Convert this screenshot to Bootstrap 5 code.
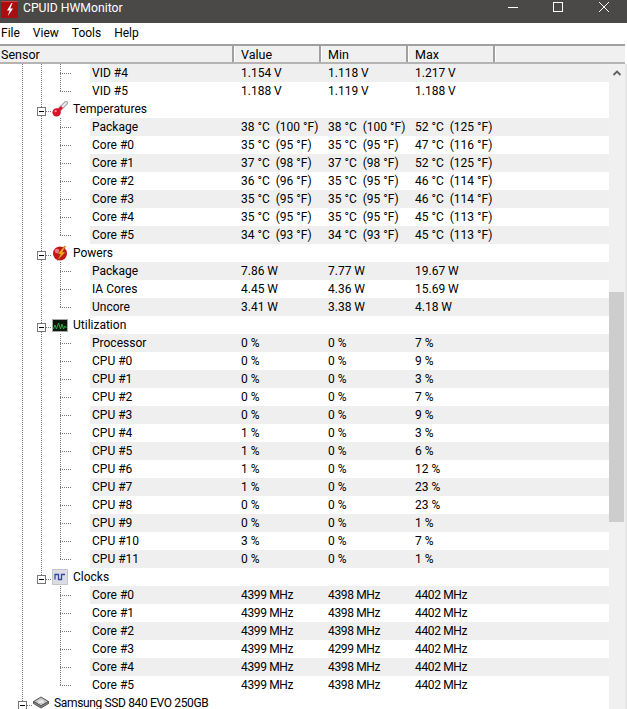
<!DOCTYPE html>
<html lang="en">
<head>
<meta charset="utf-8">
<title>CPUID HWMonitor</title>
<link href="https://cdn.jsdelivr.net/npm/bootstrap@5.3.0/dist/css/bootstrap.min.css" rel="stylesheet">
<style>
html,body{height:709px;overflow:hidden;background:#fff}
body{font:12px/18px Roboto,sans-serif;color:#000;width:627px}
.titlebar{height:23px;background:#4a4947;color:#fff;font-size:12.2px;line-height:16px}
.logo{width:18px;height:18px;margin:1px 4px 0 1px;display:block}
.winbtns{margin-left:auto;width:119px;height:23px;margin-right:18px;display:block}
.menubar{height:20px;line-height:20px;background:#fff;padding-left:1px}
.menubar span{margin-right:13px}
.headarea{height:20px;width:625px;background:#f0f0f0;border-top:2px solid #a0a0a0;border-bottom:2px solid #b4b4b4;line-height:18px;margin-top:1px;font-size:12.5px}
.hc{border-right:2px solid #a0a0a0;box-shadow:1px 0 0 #fff;height:16px;padding-left:7px;width:87px}
.hc.first{width:234px;padding-left:1px}
.viewport{height:645px}
.treepane{width:609px;overflow:hidden}
.dots-v{background-image:repeating-linear-gradient(to bottom,#777 0 1px,transparent 1px 2px);background-repeat:no-repeat;background-size:1px 100%}
.rail{background-position:22px 0}
.grp{background-position:41px 0}
.grp.lastgrp{background-size:1px 8px}
.hd{height:18px;padding-left:37px}
.hd.top{padding-left:18px;background-position:22px 0;background-size:1px 8px}
.toggle{width:9px;height:9px;border:1px solid #777;background:#fff;margin-top:7px;flex:none;padding:3px 1px}
.toggle i{display:block;height:1px;background:#000}
.conn{width:6px;height:9px;margin-top:7px;flex:none;background:repeating-linear-gradient(to right,#777 0 1px,transparent 1px 2px) 0 4px/100% 1px no-repeat}
.ico{width:16px;height:16px;flex:none;margin-top:1px;display:block}
.lbl{margin-left:5px}
.lbl.tight{letter-spacing:-.35px}
.kids{padding-left:60px}
.leaf{height:18px}
.tick{width:30px;flex:none;height:18px;background:repeating-linear-gradient(to bottom,#777 0 1px,transparent 1px 2px) 0 0/1px 100% no-repeat,repeating-linear-gradient(to right,#777 0 1px,transparent 1px 2px) 0 9px/11px 1px no-repeat}
.leaf:last-child .tick{background-size:1px 10px,11px 1px}
.strip{flex:1;height:18px;padding-left:2px;white-space:pre}
.leaf:nth-child(odd) .strip{background:#efefef}
.strip span{width:87px;display:block}
.strip span:first-child{width:149px}
.mhz .strip span+span{letter-spacing:-.35px}
.sbar{width:16px;background:#f0f0f0}
.sarrow{height:17px;display:block;width:16px}
.sthumb{height:230px;margin-top:211px;width:15px;background:#cdcdcd}
.edge{width:2px;background:#e6e6e6}
</style>
</head>
<body>
<div class="titlebar d-flex align-items-start">
  <svg class="logo" viewBox="0 0 18 18"><rect x="0" y="0" width="17" height="17" fill="#a80f12"/><rect x="0" y="0" width="17" height="1" fill="#d8383a"/><path d="M10.5 2 6 9.5h2.6L6.8 15 12 7.5H9.3L11.5 2z" fill="#fff"/></svg>
  <span>CPUID HWMonitor</span>
  <svg class="winbtns" viewBox="0 0 119 23" fill="none" stroke="#fff" stroke-width="1"><path d="M18 7.5h10"/><rect x="63.500" y="2.500" width="9" height="9"/><path d="M109 2l10 10M119 2l-10 10"/></svg>
</div>
<div class="menubar d-flex"><span>File</span><span>View</span><span>Tools</span><span>Help</span></div>
<div class="headarea d-flex">
  <div class="hc first">Sensor</div><div class="hc">Value</div><div class="hc">Min</div><div class="hc">Max</div>
</div>
<div class="viewport d-flex">
  <div class="treepane">
    <div class="rail dots-v">
      <div class="grp dots-v">
        <div class="kids">
          <div class="leaf d-flex"><div class="tick"></div><div class="strip d-flex"><span>VID #4</span><span>1.154 V</span><span>1.118 V</span><span>1.217 V</span></div></div>
          <div class="leaf d-flex"><div class="tick"></div><div class="strip d-flex"><span>VID #5</span><span>1.188 V</span><span>1.119 V</span><span>1.188 V</span></div></div>
        </div>
      </div>
      <div class="grp dots-v">
        <div class="hd d-flex"><div class="toggle"><i></i></div><div class="conn"></div>
          <svg class="ico" viewBox="0 0 16 16"><path d="M6 10 14 2" stroke="#a4a4a4" stroke-width="4" stroke-linecap="round"/><path d="M6 10 14 2" stroke="#ececec" stroke-width="1.800" stroke-linecap="round"/><path d="M5 11 10 6" stroke="#d8102a" stroke-width="2.600"/><circle cx="4.600" cy="11.400" r="4.200" fill="#d8102a"/><circle cx="3.600" cy="10.200" r="1.100" fill="#ff9aa5"/></svg>
          <span class="lbl">Temperatures</span></div>
        <div class="kids">
          <div class="leaf d-flex"><div class="tick"></div><div class="strip d-flex"><span>Package</span><span>38 °C  (100 °F)</span><span>38 °C  (100 °F)</span><span>52 °C  (125 °F)</span></div></div>
          <div class="leaf d-flex"><div class="tick"></div><div class="strip d-flex"><span>Core #0</span><span>35 °C  (95 °F)</span><span>35 °C  (95 °F)</span><span>47 °C  (116 °F)</span></div></div>
          <div class="leaf d-flex"><div class="tick"></div><div class="strip d-flex"><span>Core #1</span><span>37 °C  (98 °F)</span><span>37 °C  (98 °F)</span><span>52 °C  (125 °F)</span></div></div>
          <div class="leaf d-flex"><div class="tick"></div><div class="strip d-flex"><span>Core #2</span><span>36 °C  (96 °F)</span><span>35 °C  (95 °F)</span><span>46 °C  (114 °F)</span></div></div>
          <div class="leaf d-flex"><div class="tick"></div><div class="strip d-flex"><span>Core #3</span><span>35 °C  (95 °F)</span><span>35 °C  (95 °F)</span><span>46 °C  (114 °F)</span></div></div>
          <div class="leaf d-flex"><div class="tick"></div><div class="strip d-flex"><span>Core #4</span><span>35 °C  (95 °F)</span><span>35 °C  (95 °F)</span><span>45 °C  (113 °F)</span></div></div>
          <div class="leaf d-flex"><div class="tick"></div><div class="strip d-flex"><span>Core #5</span><span>34 °C  (93 °F)</span><span>34 °C  (93 °F)</span><span>45 °C  (113 °F)</span></div></div>
        </div>
      </div>
      <div class="grp dots-v">
        <div class="hd d-flex"><div class="toggle"><i></i></div><div class="conn"></div>
          <svg class="ico" viewBox="0 0 16 16"><circle cx="8" cy="8.500" r="7" fill="#c3161c"/><circle cx="5" cy="6" r="2.200" fill="#f0787a"/><path d="M12.500 1 5.500 9h3l-3 6.500 8-8.500h-3l3-5.500z" fill="#f5a81c" stroke="#8a4a08" stroke-width=".5"/></svg>
          <span class="lbl">Powers</span></div>
        <div class="kids">
          <div class="leaf d-flex"><div class="tick"></div><div class="strip d-flex"><span>Package</span><span>7.86 W</span><span>7.77 W</span><span>19.67 W</span></div></div>
          <div class="leaf d-flex"><div class="tick"></div><div class="strip d-flex"><span>IA Cores</span><span>4.45 W</span><span>4.36 W</span><span>15.69 W</span></div></div>
          <div class="leaf d-flex"><div class="tick"></div><div class="strip d-flex"><span>Uncore</span><span>3.41 W</span><span>3.38 W</span><span>4.18 W</span></div></div>
        </div>
      </div>
      <div class="grp dots-v">
        <div class="hd d-flex"><div class="toggle"><i></i></div><div class="conn"></div>
          <svg class="ico" viewBox="0 0 16 16"><rect x=".5" y="2.500" width="15" height="12" fill="#0c140e" stroke="#a8a8a8"/><path d="M1.500 12 3 8l1.500 4 2-6 2 6 1.500-5 1.500 5 1.500-3 1.500 2" fill="none" stroke="#28b040" stroke-width="1"/></svg>
          <span class="lbl">Utilization</span></div>
        <div class="kids">
          <div class="leaf d-flex"><div class="tick"></div><div class="strip d-flex"><span>Processor</span><span>0 %</span><span>0 %</span><span>7 %</span></div></div>
          <div class="leaf d-flex"><div class="tick"></div><div class="strip d-flex"><span>CPU #0</span><span>0 %</span><span>0 %</span><span>9 %</span></div></div>
          <div class="leaf d-flex"><div class="tick"></div><div class="strip d-flex"><span>CPU #1</span><span>0 %</span><span>0 %</span><span>3 %</span></div></div>
          <div class="leaf d-flex"><div class="tick"></div><div class="strip d-flex"><span>CPU #2</span><span>0 %</span><span>0 %</span><span>7 %</span></div></div>
          <div class="leaf d-flex"><div class="tick"></div><div class="strip d-flex"><span>CPU #3</span><span>0 %</span><span>0 %</span><span>9 %</span></div></div>
          <div class="leaf d-flex"><div class="tick"></div><div class="strip d-flex"><span>CPU #4</span><span>1 %</span><span>0 %</span><span>3 %</span></div></div>
          <div class="leaf d-flex"><div class="tick"></div><div class="strip d-flex"><span>CPU #5</span><span>1 %</span><span>0 %</span><span>6 %</span></div></div>
          <div class="leaf d-flex"><div class="tick"></div><div class="strip d-flex"><span>CPU #6</span><span>1 %</span><span>0 %</span><span>12 %</span></div></div>
          <div class="leaf d-flex"><div class="tick"></div><div class="strip d-flex"><span>CPU #7</span><span>1 %</span><span>0 %</span><span>23 %</span></div></div>
          <div class="leaf d-flex"><div class="tick"></div><div class="strip d-flex"><span>CPU #8</span><span>0 %</span><span>0 %</span><span>23 %</span></div></div>
          <div class="leaf d-flex"><div class="tick"></div><div class="strip d-flex"><span>CPU #9</span><span>0 %</span><span>0 %</span><span>1 %</span></div></div>
          <div class="leaf d-flex"><div class="tick"></div><div class="strip d-flex"><span>CPU #10</span><span>3 %</span><span>0 %</span><span>7 %</span></div></div>
          <div class="leaf d-flex"><div class="tick"></div><div class="strip d-flex"><span>CPU #11</span><span>0 %</span><span>0 %</span><span>1 %</span></div></div>
        </div>
      </div>
      <div class="grp lastgrp dots-v">
        <div class="hd d-flex"><div class="toggle"><i></i></div><div class="conn"></div>
          <svg class="ico" viewBox="0 0 16 16"><rect x=".5" y=".5" width="15" height="15" fill="#dcdce4" stroke="#c4c4cc"/><path d="M3 11V6h3.500v5h3V6H13" transform="translate(0 -.5)" fill="none" stroke="#3048a8" stroke-width="1.300"/></svg>
          <span class="lbl">Clocks</span></div>
        <div class="kids mhz">
          <div class="leaf d-flex"><div class="tick"></div><div class="strip d-flex"><span>Core #0</span><span>4399 MHz</span><span>4398 MHz</span><span>4402 MHz</span></div></div>
          <div class="leaf d-flex"><div class="tick"></div><div class="strip d-flex"><span>Core #1</span><span>4399 MHz</span><span>4398 MHz</span><span>4402 MHz</span></div></div>
          <div class="leaf d-flex"><div class="tick"></div><div class="strip d-flex"><span>Core #2</span><span>4399 MHz</span><span>4398 MHz</span><span>4402 MHz</span></div></div>
          <div class="leaf d-flex"><div class="tick"></div><div class="strip d-flex"><span>Core #3</span><span>4399 MHz</span><span>4299 MHz</span><span>4402 MHz</span></div></div>
          <div class="leaf d-flex"><div class="tick"></div><div class="strip d-flex"><span>Core #4</span><span>4399 MHz</span><span>4398 MHz</span><span>4402 MHz</span></div></div>
          <div class="leaf d-flex"><div class="tick"></div><div class="strip d-flex"><span>Core #5</span><span>4399 MHz</span><span>4398 MHz</span><span>4402 MHz</span></div></div>
        </div>
      </div>
    </div>
    <div class="hd top dots-v d-flex"><div class="toggle"><i></i></div><div class="conn"></div>
      <svg class="ico" viewBox="0 0 16 16"><g transform="translate(0 -1.500)"><path d="M.5 8 8 3.500 15.500 8 8 12.500z" fill="#c4c4c4" stroke="#555"/><path d="M.5 8v2L8 14.500 15.500 10V8L8 12.500z" fill="#8a8a8a" stroke="#555"/><ellipse cx="8" cy="8" rx="3" ry="1.600" fill="#e8e8e8"/></g></svg>
      <span class="lbl tight">Samsung SSD 840 EVO 250GB</span></div>
  </div>
  <div class="sbar">
    <svg class="sarrow" viewBox="0 0 16 17"><path d="M4.500 11 8 7.500l3.500 3.500" fill="none" stroke="#606060" stroke-width="1.800"/></svg>
    <div class="sthumb"></div>
  </div>
  <div class="edge"></div>
</div>
</body>
</html>
